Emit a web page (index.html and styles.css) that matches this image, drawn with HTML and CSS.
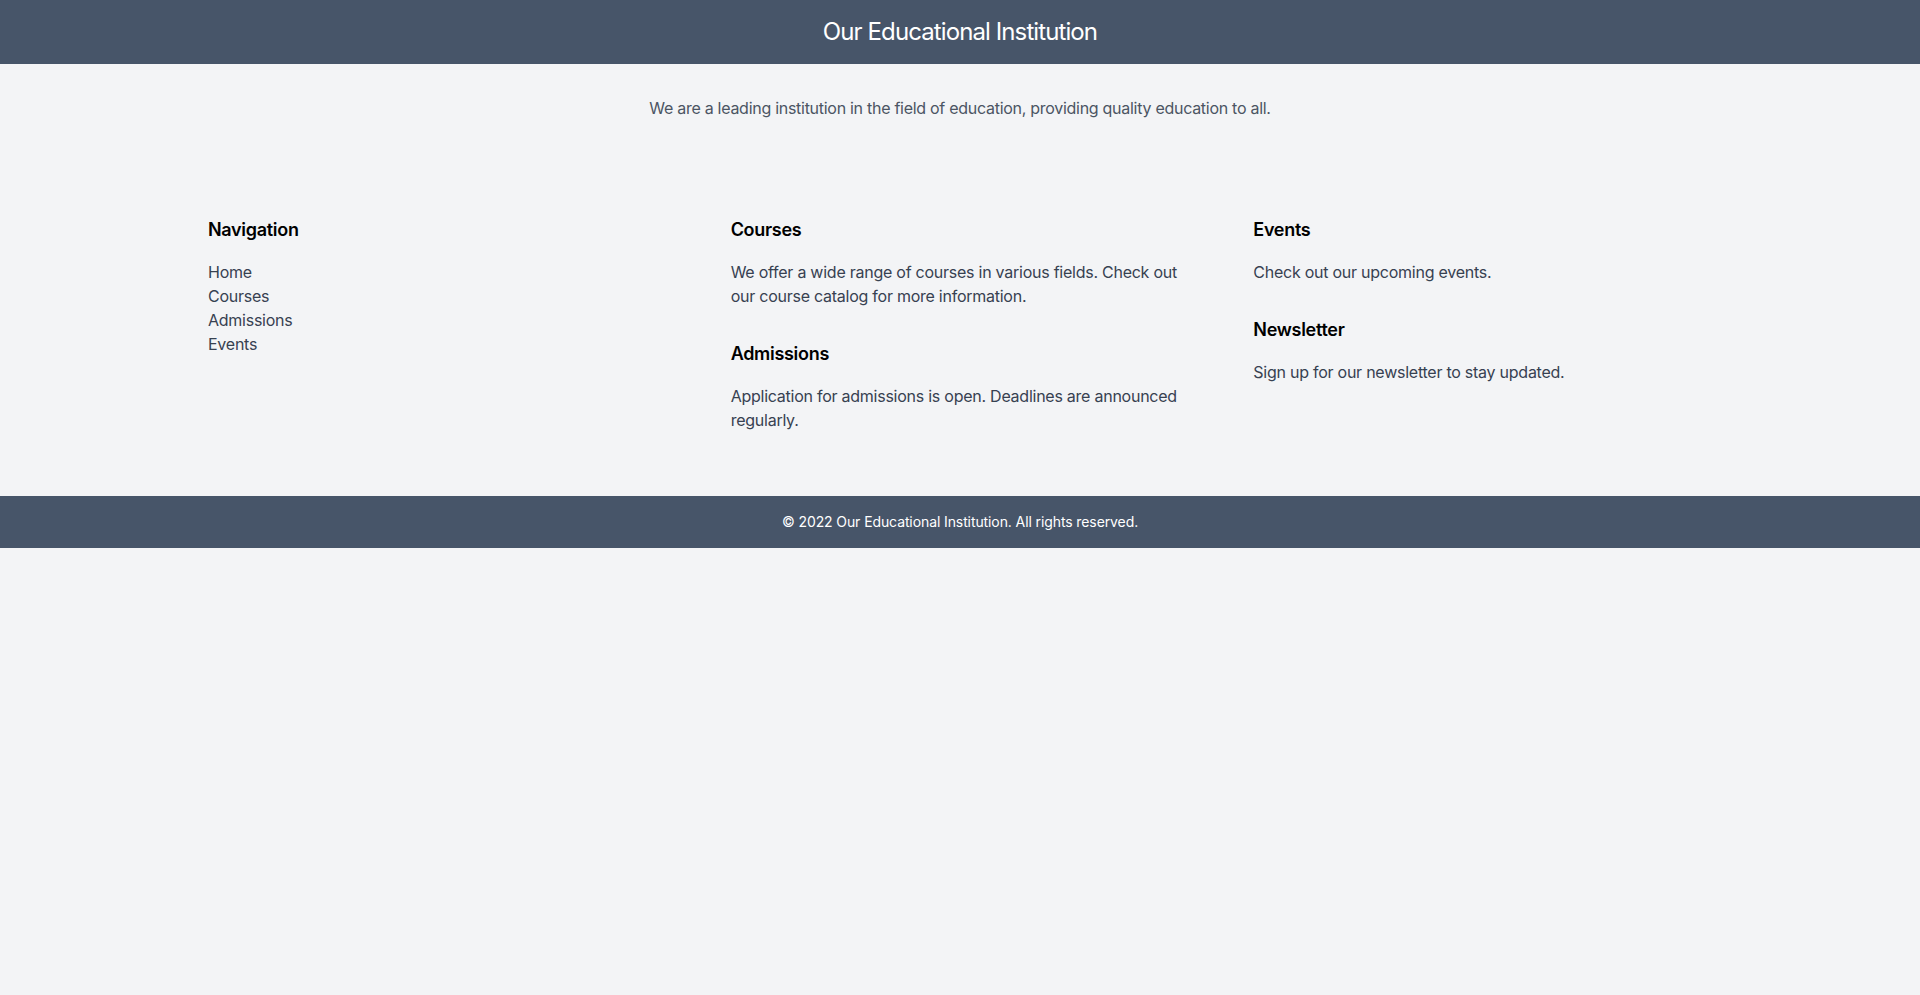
FILE: index.html
```html
<!DOCTYPE html>
<html lang="en">
<head>
<meta charset="utf-8">
<title>Our Educational Institution</title>
<link rel="stylesheet" href="styles.css">
</head>
<body>
<header class="site-header">
  <h1 class="site-title">Our Educational Institution</h1>
</header>
<main>
  <section class="intro">
    <p>We are a leading institution in the field of education, providing quality education to all.</p>
  </section>
  <section class="container info-grid">
    <div class="col">
      <div class="block">
        <h2 class="col-title">Navigation</h2>
        <ul class="nav-list">
          <li><a href="#">Home</a></li>
          <li><a href="#">Courses</a></li>
          <li><a href="#">Admissions</a></li>
          <li><a href="#">Events</a></li>
        </ul>
      </div>
    </div>
    <div class="col">
      <div class="block">
        <h2 class="col-title">Courses</h2>
        <p class="col-text">We offer a wide range of courses in various fields. Check out our course catalog for more information.</p>
      </div>
      <div class="block">
        <h2 class="col-title">Admissions</h2>
        <p class="col-text">Application for admissions is open. Deadlines are announced regularly.</p>
      </div>
    </div>
    <div class="col">
      <div class="block">
        <h2 class="col-title">Events</h2>
        <p class="col-text">Check out our upcoming events.</p>
      </div>
      <div class="block">
        <h2 class="col-title">Newsletter</h2>
        <p class="col-text">Sign up for our newsletter to stay updated.</p>
      </div>
    </div>
  </section>
</main>
<footer class="site-footer">
  <p>© 2022 Our Educational Institution. All rights reserved.</p>
</footer>
</body>
</html>
```
FILE: styles.css
```css
* { box-sizing: border-box; }
html, body { margin: 0; padding: 0; }
body {
  background: #f3f4f6;
  font-family: Inter, "Noto Sans", "Liberation Sans", sans-serif;
  font-size: 16px;
  line-height: 24px;
  color: #374151;
}
h1, h2, p, ul { margin: 0; padding: 0; }
.site-header {
  background: #475569;
  padding: 16px;
  text-align: center;
}
.site-title {
  color: #ffffff;
  font-size: 24px;
  line-height: 32px;
  font-weight: 400;
  letter-spacing: -0.9px;
}
.intro {
  padding: 32px 16px;
  text-align: center;
  color: #4b5563;
  letter-spacing: -0.28px;
}
.container {
  max-width: 1536px;
  margin: 0 auto;
  padding-left: 16px;
  padding-right: 16px;
}
.info-grid {
  display: grid;
  grid-template-columns: repeat(3, 1fr);
  column-gap: 64px;
  padding-top: 64px;
  padding-bottom: 64px;
}
.col { display: flex; flex-direction: column; gap: 32px; }
.col-title {
  font-size: 18px;
  line-height: 28px;
  font-weight: 600;
  color: #000000;
  margin-bottom: 16px;
  letter-spacing: -0.3px;
}
.col-text { letter-spacing: -0.25px; }
.nav-list { list-style: none; letter-spacing: -0.25px; }
.nav-list a { color: #374151; text-decoration: none; }
.site-footer {
  background: #475569;
  color: #ffffff;
  text-align: center;
  padding: 16px;
  font-size: 14px;
  line-height: 20px;
  letter-spacing: -0.1px;
}
```
